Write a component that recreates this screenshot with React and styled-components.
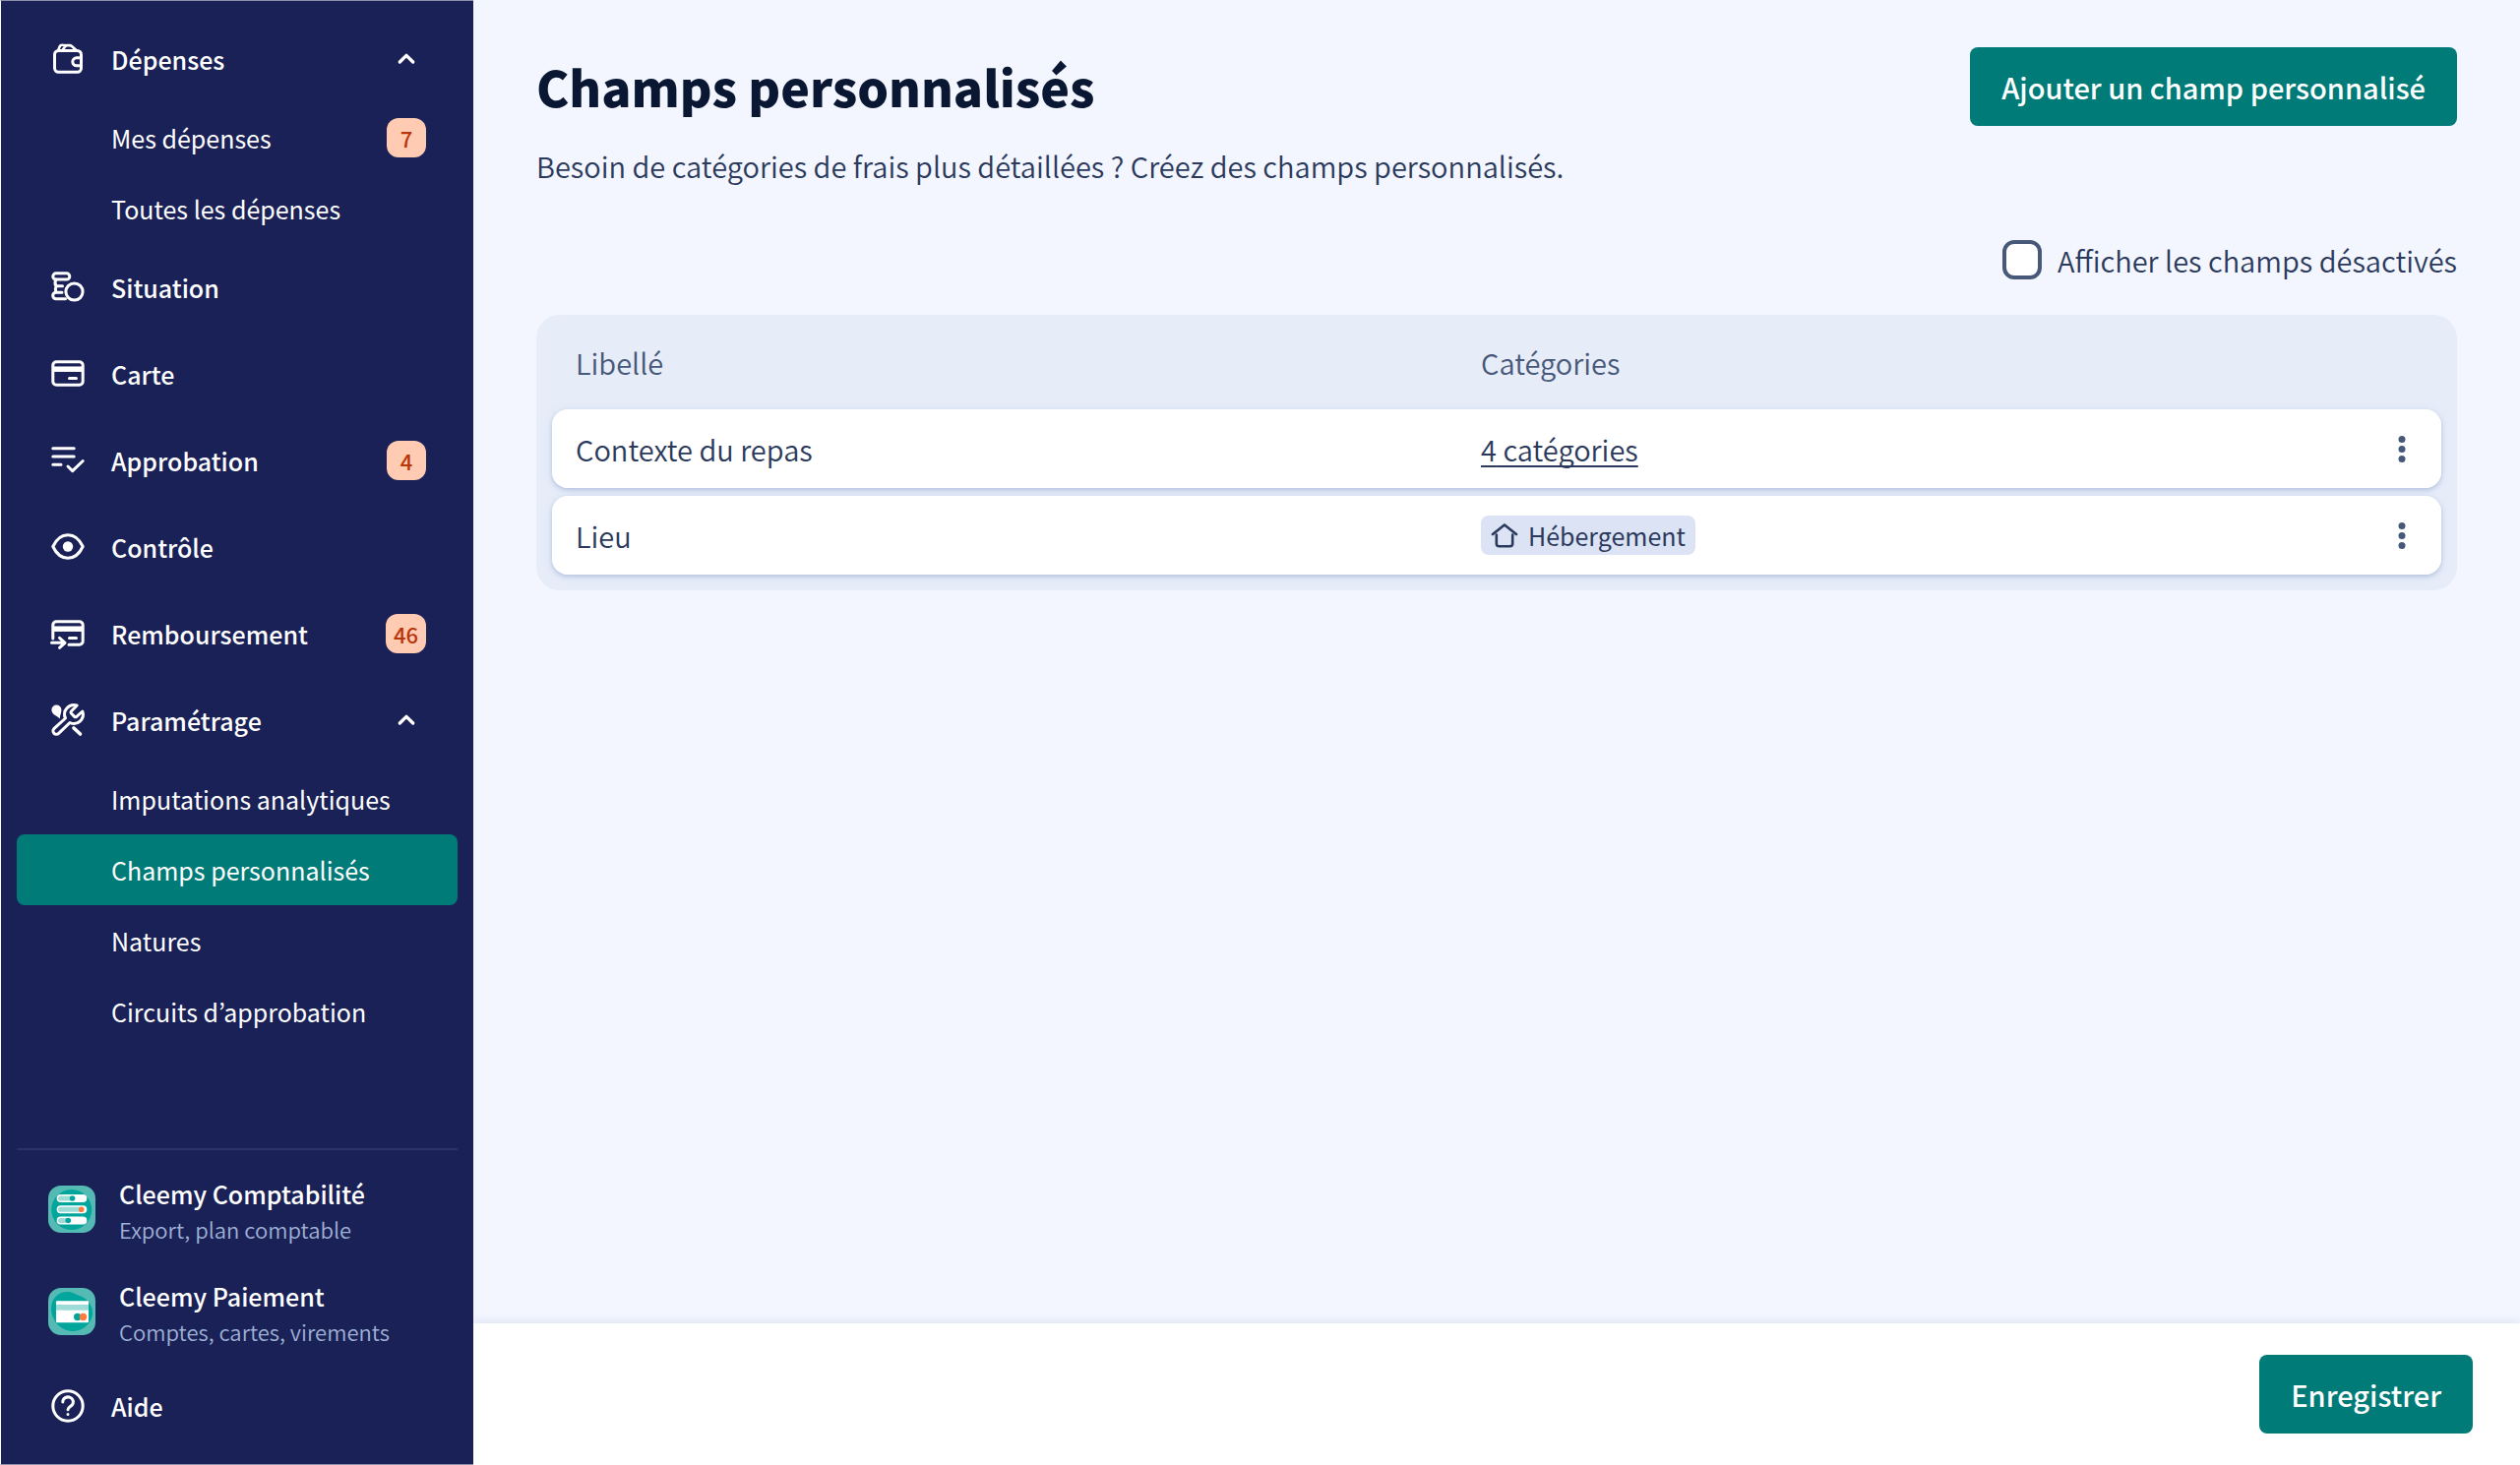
import { useState } from "react";
import styled, { createGlobalStyle } from "styled-components";

const GlobalStyle = createGlobalStyle`
  * {
    box-sizing: border-box;
  }
  body {
    margin: 0;
    background: #f3f6ff;
    color: #2b3a5c;
    font-family: "Source Sans Pro", "Noto Sans CJK KR", "Noto Sans", sans-serif;
    font-size: 29px;
    font-weight: 350;
    line-height: 48px;
  }
  button,
  input {
    font: inherit;
    color: inherit;
  }
`;

const Page = styled.div`
  display: flex;
  min-height: 100vh;
`;

const Sidebar = styled.aside`
  z-index: 1;
  flex: 0 0 481px;
  display: flex;
  flex-direction: column;
  justify-content: space-between;
  padding: 15px 16px;
  border: 1px solid #8d90ab;
  border-left-color: #fff;
  border-right: none;
  background: #1a2156;
  color: #fff;
  font-size: 25px;
  line-height: 40px;
`;

const NavList = styled.ul`
  margin: 0;
  padding: 0;
  list-style: none;
`;

const NavLink = styled.a`
  display: flex;
  align-items: center;
  gap: 24px;
  height: 88px;
  padding: 0 32px;
  color: inherit;
  font-weight: 500;
  text-decoration: none;
`;

const NavToggle = styled(NavLink)`
  width: 100%;
  border: none;
  background: none;
  text-align: left;
  cursor: pointer;
`;

const NavLabel = styled.span`
  flex: 1;
`;

const SubLink = styled.a`
  display: flex;
  align-items: center;
  height: 72px;
  padding: 0 32px 0 96px;
  border-radius: 8px;
  background: ${({ $active }) => ($active ? "#007b78" : "transparent")};
  color: inherit;
  font-weight: 400;
  text-decoration: none;
`;

const Badge = styled.span`
  min-width: 40px;
  padding: 0 8px;
  border-radius: 12px;
  background: #ffcbb3;
  color: #b8360b;
  font-size: 22px;
  font-weight: 500;
  text-align: center;
`;

const AppList = styled.div`
  padding-top: 8px;
  border-top: 2px solid #2b3468;
`;

const AppLink = styled.a`
  display: flex;
  align-items: center;
  gap: 24px;
  height: 104px;
  padding: 0 32px;
  color: inherit;
  text-decoration: none;
`;

const AppName = styled.strong`
  display: block;
  font-weight: 500;
`;

const AppDetail = styled.span`
  display: block;
  color: #9fb0d5;
  font-size: 22px;
  line-height: 32px;
`;

const Main = styled.main`
  flex: 1;
  min-width: 0;
  display: flex;
  flex-direction: column;
`;

const Content = styled.div`
  flex: 1;
  padding: 48px 64px;
`;

const Header = styled.header`
  display: flex;
  align-items: flex-start;
  justify-content: space-between;
`;

const Title = styled.h1`
  margin: 0;
  color: #0a1733;
  font-size: 50px;
  font-weight: 900;
  line-height: 78px;
`;

const Intro = styled.p`
  margin: 16px 0 48px;
`;

const Button = styled.button`
  padding: 16px 32px;
  border: none;
  border-radius: 8px;
  background: #007b78;
  color: #fff;
  font-weight: 500;
  cursor: pointer;
`;

const Filter = styled.label`
  display: flex;
  align-items: center;
  justify-content: flex-end;
  gap: 16px;
  margin-bottom: 32px;
`;

const Checkbox = styled.input`
  appearance: none;
  width: 40px;
  height: 40px;
  margin: 0;
  border: 4px solid #475878;
  border-radius: 12px;
  background: #fff;

  &:checked {
    background: #007b78;
  }
`;

const TableCard = styled.div`
  padding: 0 16px 8px;
  border-radius: 24px;
  background: #e6ecf8;
`;

const Table = styled.table`
  width: 100%;
  table-layout: fixed;
  border-collapse: separate;
  border-spacing: 0 8px;
`;

const HeadCell = styled.th`
  width: ${({ $width }) => $width || "auto"};
  height: 80px;
  padding: 0 24px;
  color: #475878;
  font-weight: inherit;
  text-align: left;
`;

const Row = styled.tr`
  border-radius: 16px;
  box-shadow: 0 2px 4px #b9c6e0, 0 2px 8px #d5def2;
`;

const Cell = styled.td`
  height: 80px;
  padding: 0 24px;
  background: #fff;

  &:first-child {
    border-radius: 16px 0 0 16px;
  }
  &:last-child {
    padding: 0 20px;
    border-radius: 0 16px 16px 0;
  }
`;

const CategoriesLink = styled.a`
  color: inherit;
  text-decoration: underline;
  text-decoration-thickness: 2px;
  text-decoration-skip-ink: none;
  text-underline-offset: 4px;
`;

const Chip = styled.span`
  display: flex;
  align-items: center;
  gap: 8px;
  width: fit-content;
  padding: 0 10px 0 8px;
  border-radius: 8px;
  background: #dce3f5;
  font-size: 25px;
  font-weight: 400;
  line-height: 40px;
`;

const MenuButton = styled.button`
  display: block;
  width: 40px;
  height: 40px;
  padding: 0;
  border: none;
  background: none;
  color: #475878;
  cursor: pointer;
`;

const Footer = styled.footer`
  display: flex;
  justify-content: flex-end;
  padding: 32px 48px;
  background: #fff;
  box-shadow: 0 -2px 8px #dde3f2;
`;

const IconSvg = styled.svg`
  flex: none;
  display: block;
  fill: none;
  stroke: currentColor;
  stroke-width: 3;
  stroke-linecap: round;
  stroke-linejoin: round;
`;

const Icon = ({ size = 40, children }) => (
  <IconSvg
    width={size}
    height={size}
    viewBox={`0 0 ${size} ${size}`}
    aria-hidden="true"
  >
    {children}
  </IconSvg>
);

const WalletIcon = () => (
  <Icon>
    <rect x="6.5" y="11.5" width="27" height="21.8" rx="4" />
    <path d="M33 18.8h-4.2a4 4 0 0 0 0 8H33" />
    <path
      strokeWidth="2.6"
      d="M10.2 11l1.4-3.6q.8-1.8 3-1.6l3 .2M14.4 11l3-4q.8-.9 2-.9h2.4q1.2 0 2.2.9l4.4 4"
    />
  </Icon>
);

const CoinsIcon = () => (
  <Icon>
    <rect x="4.8" y="5.8" width="17" height="6.2" rx="3.1" />
    <path d="M8 12q-2.2 3.4 0 6.8h6.5M8 18.8q-1.4 3.2 0 6.4M14 25.2H8a3.2 3.2 0 0 0 0 6.6h9.5" />
    <circle cx="26.5" cy="24.5" r="8.6" />
  </Icon>
);

const CardIcon = () => (
  <Icon>
    <rect x="4.8" y="7.8" width="30.4" height="23.4" rx="3.5" />
    <path d="M5 15.2h30" strokeWidth="5.5" strokeLinecap="butt" />
    <path d="M21.5 24.5h7" />
  </Icon>
);

const ApprovalIcon = () => (
  <Icon>
    <path d="M4.8 7.7h21.4M4.8 16h21.4M4.8 24.3h8.2M20 26l4.7 4.7 10.5-10.2" />
  </Icon>
);

const EyeIcon = () => (
  <Icon>
    <path d="M4.8 19.5C8.2 12.2 13.5 7.8 20 7.8s11.8 4.4 15.2 11.7C31.8 26.8 26.5 31.2 20 31.2S8.2 26.8 4.8 19.5z" />
    <circle cx="20" cy="19.5" r="5.2" fill="currentColor" stroke="none" />
  </Icon>
);

const RefundIcon = () => (
  <Icon>
    <path d="M4.8 25V11.3a3.5 3.5 0 0 1 3.5-3.5h23.4a3.5 3.5 0 0 1 3.5 3.5v16.4a3.5 3.5 0 0 1-3.5 3.5H21" />
    <path d="M5 15.2h30" strokeWidth="5.5" strokeLinecap="butt" />
    <path d="M21.5 24.5h7M3.5 29.3h13M11.5 24.3l5.5 5-5.5 5" />
  </Icon>
);

const ToolsIcon = () => (
  <Icon>
    <path
      transform="scale(1.667)"
      strokeWidth="1.8"
      d="M14 6.6a1 1 0 0 0 0 1.2l2 2a1 1 0 0 0 1.3 0l3.6-3.2a5.6 5.6 0 0 1-7.7 6.9l-6.8 6.5a1.95 1.95 0 0 1-2.9-2.8l7-6.4a5.7 5.7 0 0 1 7-7.8z"
    />
    <path
      d="M3.4 9.5a5 5 0 0 1 10 0c0 3.5-1.4 4.5-1.4 9C8 15 3.4 14 3.4 9.5z"
      fill="currentColor"
      stroke="none"
    />
    <path d="M26 28l6.5 6" strokeWidth="3.6" />
  </Icon>
);

const HelpIcon = () => (
  <Icon>
    <circle cx="20" cy="20" r="15.2" />
    <path d="M14.8 16a5.3 5 0 1 1 8.2 4.1c-1.8 1.2-3 2-3 3.7M20 28.5v.1" />
  </Icon>
);

const ChevronIcon = () => (
  <Icon>
    <path d="M13.3 23l6.7-6.6 6.7 6.6" strokeWidth="3.4" />
  </Icon>
);

const HomeIcon = () => (
  <Icon size={32}>
    <path
      strokeWidth="2.6"
      d="M4 15L16 5.4 28 15M7.8 15.5v9a2.8 2.8 0 0 0 2.8 2.8h10.8a2.8 2.8 0 0 0 2.8-2.8v-9"
    />
  </Icon>
);

const DotsIcon = () => (
  <Icon>
    <g fill="currentColor" stroke="none">
      <circle cx="20" cy="10.5" r="3.5" />
      <circle cx="20" cy="20.5" r="3.5" />
      <circle cx="20" cy="30.5" r="3.5" />
    </g>
  </Icon>
);

const AccountingLogo = () => (
  <svg width="48" height="48" viewBox="0 0 48 48" aria-hidden="true">
    <rect width="48" height="48" rx="13" fill="#55bab3" />
    <circle cx="23.7" cy="24.5" r="20.5" fill="#00a69c" />
    <rect x="8.7" y="9" width="30.6" height="8" rx="4" fill="#fff" />
    <rect x="8.7" y="20.3" width="30.6" height="8" rx="4" fill="#fff" />
    <rect x="8.7" y="31.5" width="30.6" height="8" rx="4" fill="#fff" />
    <rect x="10" y="10.5" width="15" height="5" rx="2.5" fill="#9cdbd6" />
    <rect x="10" y="21.8" width="24" height="5" rx="2.5" fill="#9cdbd6" />
    <rect x="10" y="33" width="11" height="5" rx="2.5" fill="#9cdbd6" />
    <circle cx="24.6" cy="13" r="2.8" fill="#00a69c" />
    <circle cx="33.7" cy="24.3" r="2.8" fill="#ff7a3d" />
    <circle cx="20.3" cy="35.5" r="2.8" fill="#00a69c" />
  </svg>
);

const PaymentLogo = () => (
  <svg width="48" height="48" viewBox="0 0 48 48" aria-hidden="true">
    <rect width="48" height="48" rx="13" fill="#55bab3" />
    <path
      d="M3 21C3 10 11 4 19 4c6 0 7 2 13 4 7 2.5 13 9 13 17 0 10-9 19-20 19S3 34 3 21z"
      fill="#00a69c"
    />
    <rect x="8" y="13.3" width="33" height="22" rx="1" fill="#fff" />
    <rect x="8" y="17" width="33" height="5.7" fill="#9cdbd6" />
    <circle cx="29.7" cy="29.5" r="3.7" fill="#00a69c" />
    <circle cx="35.5" cy="29.5" r="3.7" fill="#ff7a3d" />
  </svg>
);

const NAV = [
  {
    label: "Dépenses",
    icon: WalletIcon,
    children: [
      { label: "Mes dépenses", count: 7 },
      { label: "Toutes les dépenses" },
    ],
  },
  { label: "Situation", icon: CoinsIcon },
  { label: "Carte", icon: CardIcon },
  { label: "Approbation", icon: ApprovalIcon, count: 4 },
  { label: "Contrôle", icon: EyeIcon },
  { label: "Remboursement", icon: RefundIcon, count: 46 },
  {
    label: "Paramétrage",
    icon: ToolsIcon,
    children: [
      { label: "Imputations analytiques" },
      { label: "Champs personnalisés", active: true },
      { label: "Natures" },
      { label: "Circuits d’approbation" },
    ],
  },
];

const APPS = [
  {
    name: "Cleemy Comptabilité",
    detail: "Export, plan comptable",
    logo: AccountingLogo,
  },
  {
    name: "Cleemy Paiement",
    detail: "Comptes, cartes, virements",
    logo: PaymentLogo,
  },
];

const FIELDS = [
  { label: "Contexte du repas", categoryCount: 4 },
  { label: "Lieu", category: "Hébergement" },
];

const NavGroup = ({ item }) => {
  const [open, setOpen] = useState(true);

  return (
    <li>
      <NavToggle
        as="button"
        type="button"
        aria-expanded={open}
        onClick={() => setOpen(!open)}
      >
        <item.icon />
        <NavLabel>{item.label}</NavLabel>
        <ChevronIcon />
      </NavToggle>
      {open && (
        <NavList>
          {item.children.map((child) => (
            <li key={child.label}>
              <SubLink
                href="#"
                $active={child.active}
                aria-current={child.active ? "page" : undefined}
              >
                <NavLabel>{child.label}</NavLabel>
                {child.count && <Badge>{child.count}</Badge>}
              </SubLink>
            </li>
          ))}
        </NavList>
      )}
    </li>
  );
};

const NavItem = ({ item }) => (
  <li>
    <NavLink href="#">
      <item.icon />
      <NavLabel>{item.label}</NavLabel>
      {item.count && <Badge>{item.count}</Badge>}
    </NavLink>
  </li>
);

const FieldRow = ({ field }) => (
  <Row>
    <Cell>{field.label}</Cell>
    <Cell>
      {field.category ? (
        <Chip>
          <HomeIcon />
          {field.category}
        </Chip>
      ) : (
        <CategoriesLink href="#">{field.categoryCount} catégories</CategoriesLink>
      )}
    </Cell>
    <Cell>
      <MenuButton type="button" aria-label={`Actions ${field.label}`}>
        <DotsIcon />
      </MenuButton>
    </Cell>
  </Row>
);

const App = () => {
  const [showDisabled, setShowDisabled] = useState(false);

  return (
    <>
      <GlobalStyle />
      <Page>
        <Sidebar>
          <nav>
            <NavList>
              {NAV.map((item) =>
                item.children ? (
                  <NavGroup key={item.label} item={item} />
                ) : (
                  <NavItem key={item.label} item={item} />
                )
              )}
            </NavList>
          </nav>
          <AppList>
            {APPS.map((app) => (
              <AppLink key={app.name} href="#">
                <app.logo />
                <span>
                  <AppName>{app.name}</AppName>
                  <AppDetail>{app.detail}</AppDetail>
                </span>
              </AppLink>
            ))}
            <NavLink href="#">
              <HelpIcon />
              <NavLabel>Aide</NavLabel>
            </NavLink>
          </AppList>
        </Sidebar>
        <Main>
          <Content>
            <Header>
              <Title>Champs personnalisés</Title>
              <Button type="button">Ajouter un champ personnalisé</Button>
            </Header>
            <Intro>
              Besoin de catégories de frais plus détaillées ? Créez des champs
              personnalisés.
            </Intro>
            <Filter>
              <Checkbox
                type="checkbox"
                checked={showDisabled}
                onChange={(e) => setShowDisabled(e.target.checked)}
              />
              Afficher les champs désactivés
            </Filter>
            <TableCard>
              <Table>
                <thead>
                  <tr>
                    <HeadCell scope="col">Libellé</HeadCell>
                    <HeadCell scope="col">Catégories</HeadCell>
                    <HeadCell as="td" $width="80px" />
                  </tr>
                </thead>
                <tbody>
                  {FIELDS.map((field) => (
                    <FieldRow key={field.label} field={field} />
                  ))}
                </tbody>
              </Table>
            </TableCard>
          </Content>
          <Footer>
            <Button type="button">Enregistrer</Button>
          </Footer>
        </Main>
      </Page>
    </>
  );
};

export default App;
